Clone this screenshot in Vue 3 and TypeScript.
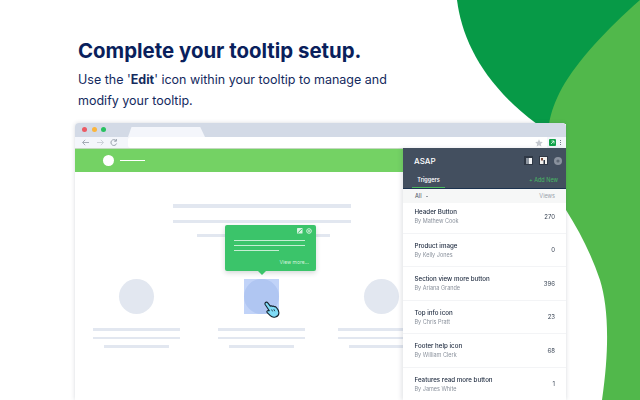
<script setup lang="ts">
interface Trigger {
  title: string
  author: string
  views: number
}

const triggers: Trigger[] = [
  { title: 'Header Button', author: 'By Mathew Cook', views: 270 },
  { title: 'Product image', author: 'By Kelly Jones', views: 0 },
  { title: 'Section view more button', author: 'By Ariana Grande', views: 396 },
  { title: 'Top info icon', author: 'By Chris Pratt', views: 23 },
  { title: 'Footer help icon', author: 'By William Clerk', views: 68 },
  { title: 'Features read more button', author: 'By James White', views: 1 },
]

const features = [0, 1, 2]
</script>

<template>
  <div class="page">
    <svg class="blobs" width="640" height="400" viewBox="0 0 640 400">
      <path d="M457 0C462 40 484 85 537 124L640 124V0Z" fill="#079a47" />
      <path d="M640 0C606 30 578 60 562 88C555 101 551 112 549 124L566 124L566 210C580 232 592 256 600 280C608 306 610 345 602 400H640Z" fill="#51b84b" />
    </svg>

    <header class="intro">
      <h1>Complete your tooltip setup.</h1>
      <p>Use the '<b>Edit</b>' icon within your tooltip to manage and<br />modify your tooltip.</p>
    </header>

    <section class="window">
      <div class="titlebar">
        <span class="light red"></span>
        <span class="light orange"></span>
        <span class="light green"></span>
        <span class="tab"></span>
      </div>
      <div class="toolbar">
        <svg class="nav" width="40" height="9" viewBox="0 0 40 9" fill="none" stroke-width="1">
          <path d="M8 4.5H1.5M4.2 1.8L1.5 4.5L4.2 7.2" stroke="#a6adb7" />
          <path d="M16 4.5H22.5M19.8 1.8L22.5 4.5L19.8 7.2" stroke="#cdd2d9" />
          <path d="M35 2.6A2.9 2.9 0 1 0 35.6 5.5M35.4 1V3.2H33.2" stroke="#98a0ab" />
        </svg>
        <div class="address">
          <svg width="8" height="8" viewBox="0 0 24 24"><path d="M12 1l3.4 7.4 8 .9-6 5.4 1.7 8L12 18.600l-7.100 4.100 1.700-8-6-5.400 8-.9z" fill="#c5c9cf" /></svg>
        </div>
        <svg class="ext" width="7" height="7" viewBox="0 0 7 7"><rect width="7" height="7" rx="1" fill="#12a24b" /><path d="M2 5L5 2M2.500 2H5V4.500" stroke="#e9f7ee" fill="none" stroke-width=".8" /></svg>
        <span class="kebab"><i></i><i></i><i></i></span>
      </div>

      <div class="viewport">
        <div class="site">
          <div class="site-bar">
            <span class="site-logo"></span>
            <span class="site-name"></span>
          </div>
          <div class="hero">
            <span class="bar hero-top"></span>
            <span class="bar hero-mid"></span>
            <span class="bar hero-short"></span>
          </div>
          <div class="features">
            <div v-for="n in features" :key="n" class="feature">
              <div class="thumb" :class="{ picked: n === 1 }">
                <span class="circle"></span>
                <template v-if="n === 1">
                  <div class="tooltip">
                    <div class="tip-icons">
                      <svg width="6" height="6" viewBox="0 0 6 6"><rect width="5.500" height="5.500" rx=".6" fill="#d8f3e1" /><path d="M1 4.800L4.800 1" stroke="#3bc46a" stroke-width="1" /></svg>
                      <svg width="6" height="6" viewBox="0 0 6 6"><circle cx="3" cy="3" r="2.300" fill="none" stroke="#d8f3e1" stroke-width="1" /><circle cx="3" cy="3" r=".9" fill="#d8f3e1" /></svg>
                    </div>
                    <span class="tip-line"></span>
                    <span class="tip-line"></span>
                    <span class="tip-line short"></span>
                    <span class="tip-more">View more...</span>
                  </div>
                  <svg class="hand" width="16" height="17" viewBox="0 0 16 17">
                    <path d="M1 2.300C1.500 .9 3 .8 3.800 1.800L6.300 5.200C6.900 4.700 7.800 4.800 8.300 5.400C8.900 5 9.800 5.100 10.300 5.800C11 5.500 11.800 5.800 12.300 6.400C13.800 8 15 10 14.900 12C14.800 14 13.500 15.500 11.500 16C9.300 16.500 7.600 16 6.300 14.700L3.200 11.600C2.500 10.900 2.900 9.700 4 9.500L5.300 9.800L1.300 3.800C1 3.300 .9 2.800 1 2.300Z" fill="#7fdcf6" stroke="#16232e" stroke-width="1.100" stroke-linejoin="round" />
                    <path d="M7.600 8.500L8.600 10.400M9.800 8.200L10.800 10.200" stroke="#16232e" stroke-width=".8" fill="none" />
                  </svg>
                </template>
              </div>
              <span class="bar full"></span>
              <span class="bar full"></span>
              <span class="bar part"></span>
            </div>
          </div>
        </div>

        <aside class="panel">
          <div class="panel-head">
            <div class="panel-title">
              <span class="asap">ASAP</span>
              <span class="head-icon dock"><i></i></span>
              <svg class="head-icon" width="9" height="9" viewBox="0 0 9 9"><rect width="9" height="9" fill="#2f3845" /><path d="M1 1H8V8H6V4H4.500V8H1Z" fill="#f2f1ee" /><rect x="2" y="2" width="2" height="2.500" fill="#7a4a3c" /></svg>
              <svg class="head-icon" width="8" height="8" viewBox="0 0 8 8"><circle cx="4" cy="4" r="4" fill="#8a929e" /><circle cx="4" cy="4" r="1.600" fill="#5f6875" /></svg>
            </div>
            <div class="panel-tabs">
              <span class="panel-tab">Triggers</span>
              <span class="add">+ Add New</span>
            </div>
          </div>
          <div class="subbar">
            <span class="filter">All <i class="caret"></i></span>
            <span class="views-label">Views</span>
          </div>
          <ul class="rows">
            <li v-for="item in triggers" :key="item.title" class="row">
              <div class="row-text">
                <div class="row-title">{{ item.title }}</div>
                <div class="row-author">{{ item.author }}</div>
              </div>
              <span class="row-views">{{ item.views }}</span>
            </li>
          </ul>
        </aside>
      </div>
    </section>
  </div>
</template>

<style>
html, body { margin: 0; background: #fff; }
</style>

<style scoped>
.page {
  position: relative;
  width: 640px;
  height: 400px;
  overflow: hidden;
  background: #fff;
  font-family: Inter, "Liberation Sans", sans-serif;
}
.blobs { position: absolute; left: 0; top: 0; }

.intro {
  position: relative;
  padding: 37px 0 0 78px;
  height: 86px;
  color: #0a1f5c;
}
.intro h1 {
  margin: 0;
  font-size: 20.4px;
  line-height: 27px;
  font-weight: 700;
}
.intro p {
  margin: 5px 0 0;
  font-size: 12.5px;
  line-height: 21px;
  color: #142a5e;
}
.intro b { font-weight: 700; }

.window {
  position: relative;
  width: 491px;
  height: 277px;
  margin-left: 75px;
  border-radius: 4px 4px 0 0;
  overflow: hidden;
  background: #fff;
  box-shadow: 0 0 4px rgba(60, 70, 90, .2);
}
.titlebar {
  display: flex;
  align-items: center;
  height: 14px;
  padding-left: 7px;
  gap: 4.500px;
  background: #d3dae6;
}
.light { width: 5px; height: 5px; border-radius: 50%; margin-top: -2px; }
.red { background: #ec5a63; }
.orange { background: #fbb53c; }
.green { background: #27c160; }
.tab {
  width: 77px;
  height: 10.500px;
  margin: 3.500px 0 0 17.500px;
  background: #f4f6fb;
  clip-path: polygon(3.700px 0, 72px 0, 77px 100%, 0 100%);
}
.toolbar {
  display: flex;
  align-items: center;
  height: 11px;
  background: #f4f6fb;
}
.nav { margin-left: 6px; width: 40px; flex: none; }
.address {
  display: flex;
  align-items: center;
  justify-content: flex-end;
  width: 419px;
  height: 11px;
  margin-left: 7px;
  padding-right: 4px;
  box-sizing: border-box;
  background: #fff;
  border-radius: 3px 0 0 3px;
}
.ext { margin-left: 2px; }
.kebab { display: flex; flex-direction: column; gap: 1px; margin-left: 3.500px; }
.kebab i { width: 1px; height: 1px; background: #77808c; }

.viewport { display: flex; height: 252px; }
.site { width: 328px; flex: none; overflow: hidden; }
.site-bar {
  display: flex;
  align-items: center;
  height: 24px;
  padding-left: 28px;
  background: #74d264;
  border-top: 1px solid #c4d8c0;
  box-sizing: border-box;
}
.site-logo { width: 11px; height: 11px; border-radius: 50%; background: #fff; }
.site-name { width: 25px; height: 1.500px; margin-left: 6px; background: #fff; }

.bar { display: block; background: #e2e7f0; }
.hero {
  display: flex;
  flex-direction: column;
  align-items: center;
  padding: 32px 0 0 45px;
}
.hero-top { width: 178px; height: 4px; }
.hero-mid { width: 178px; height: 3px; margin-top: 11.500px; }
.hero-short { width: 133px; height: 3px; margin: 11.500px 0 0 3px; }

.features {
  display: flex;
  gap: 38px;
  padding: 42px 0 0 18px;
}
.feature { width: 87px; flex: none; }
.feature:last-child { margin-left: -5px; }
.thumb {
  position: relative;
  display: block;
  width: 35px;
  height: 35px;
  margin: 0 auto 14px;
}
.circle { display: block; width: 35px; height: 35px; border-radius: 50%; background: #e2e7f0; }
.picked { background: #c1d3f8; }
.picked .circle { background: #b0c6f2; }
.feature .bar { height: 2.500px; margin-bottom: 6.200px; }
.feature .part { width: 65px; margin: 0 auto; }

.tooltip {
  position: absolute;
  left: -19px;
  bottom: 43.500px;
  width: 91px;
  height: 46px;
  padding: 15px 0 0 9px;
  box-sizing: border-box;
  background: #3bc46a;
  border-radius: 2px;
  box-shadow: 0 2px 5px rgba(40, 60, 60, .2);
}
.tooltip::after {
  content: "";
  position: absolute;
  left: 33px;
  top: 100%;
  border: 4px solid transparent;
  border-top-color: #3bc46a;
  border-bottom-width: 0;
}
.tip-icons {
  position: absolute;
  top: 3px;
  right: 4px;
  display: flex;
  gap: 3px;
}
.tip-icons svg { display: block; }
.tip-line {
  display: block;
  width: 71px;
  height: 1.500px;
  margin-bottom: 3.700px;
  background: #c6eed3;
}
.tip-line.short { width: 45px; }
.tip-more {
  position: absolute;
  right: 7px;
  bottom: 5px;
  font-size: 5px;
  line-height: 7px;
  color: #d6f3df;
}
.hand { position: absolute; left: 20px; top: 22px; }

.panel {
  display: flex;
  flex-direction: column;
  width: 163px;
  flex: none;
  background: #fff;
  box-shadow: -2px 0 4px rgba(50, 60, 80, .12);
  z-index: 1;
}
.panel-head {
  flex: none;
  height: 41px;
  box-sizing: border-box;
  background: #434f5f;
  border-bottom: 1px solid #1c3350;
}
.panel-title {
  display: flex;
  align-items: center;
  gap: 6px;
  height: 25px;
  padding: 0 4px 0 11px;
}
.asap {
  margin-right: auto;
  font-size: 8px;
  font-weight: 500;
  color: #fff;
}
.head-icon { display: block; flex: none; }
.dock {
  width: 9px;
  height: 9px;
  padding: 1.500px;
  box-sizing: border-box;
  background: #2f3845;
}
.dock i { display: block; width: 100%; height: 100%; background: linear-gradient(90deg, #8c949e 50%, #f4f5f6 50%); }
.panel-tabs {
  display: flex;
  justify-content: space-between;
  height: 15px;
  padding: 0 8px 0 9px;
}
.panel-tab {
  width: 33px;
  height: 15px;
  padding-top: 3px;
  box-sizing: border-box;
  border-bottom: 1px solid #4bb95e;
  font-size: 5.500px;
  line-height: 8px;
  font-weight: 600;
  text-align: center;
  color: #fff;
}
.add {
  padding-top: 3px;
  font-size: 5.500px;
  line-height: 8px;
  color: #48b864;
}
.subbar {
  flex: none;
  display: flex;
  align-items: center;
  justify-content: space-between;
  height: 14px;
  padding: 0 11px 0 12px;
  background: #f6f7f7;
  font-size: 5.500px;
}
.filter { display: flex; align-items: center; gap: 5px; color: #3c4656; }
.caret {
  border: 1.500px solid transparent;
  border-top-color: #3c4656;
  border-bottom-width: 0;
}
.views-label { color: #9aa1ab; }
.rows { margin: -3px 0 0; padding: 0; list-style: none; will-change: transform; }
.row {
  display: flex;
  align-items: center;
  justify-content: space-between;
  height: 33.500px;
  box-sizing: border-box;
  padding: 0 11px 0 11.500px;
  border-bottom: 1px solid #f3f4f6;
}
.row-title {
  font-size: 6.200px;
  line-height: 9px;
  font-weight: 500;
  color: #243044;
}
.row-author {
  margin-top: 1px;
  font-size: 5.500px;
  line-height: 8px;
  color: #8a919c;
}
.row-views { font-size: 6px; color: #3b4656; }
</style>
